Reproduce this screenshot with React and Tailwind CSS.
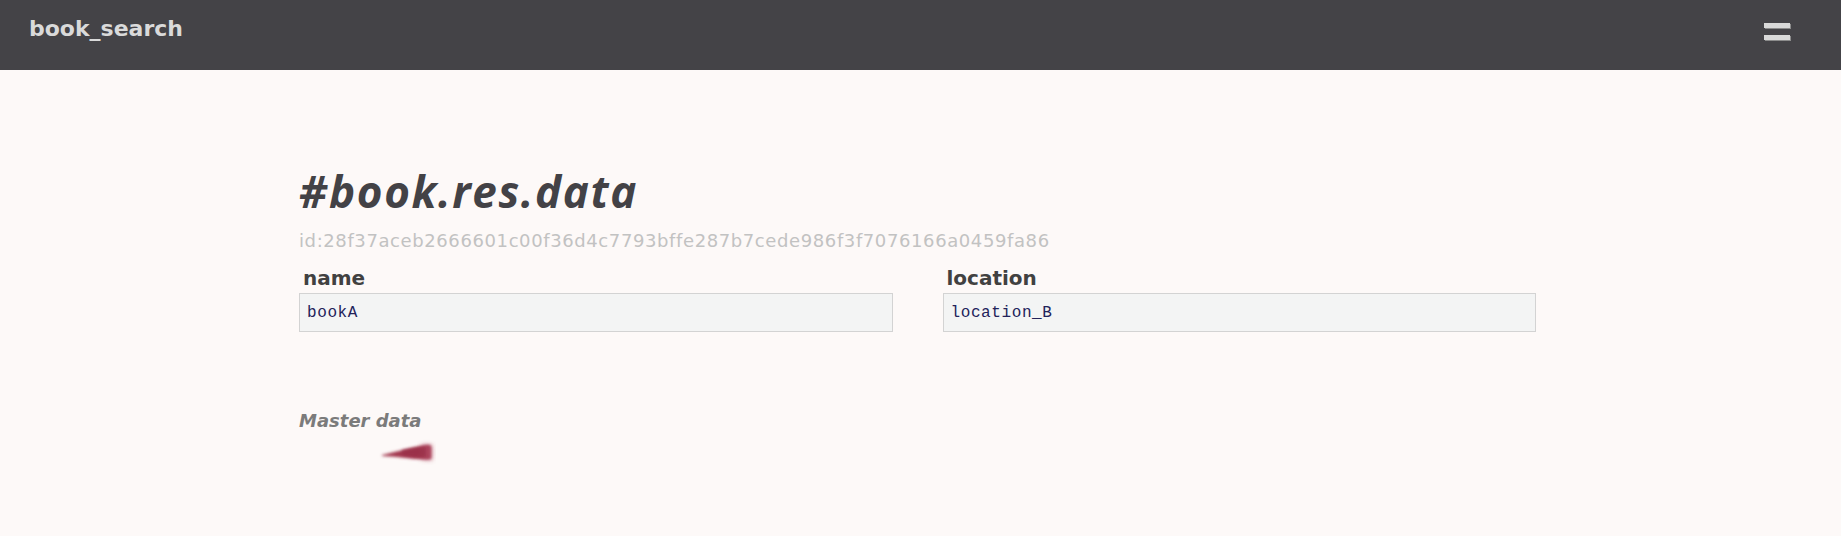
import React from "react";

function Brush() {
  return (
    <svg width="76" height="32" viewBox="0 0 76 32" className="block">
      <defs>
        <filter id="bl" x="-30%" y="-60%" width="160%" height="220%">
          <feGaussianBlur stdDeviation="1.6" />
        </filter>
        <filter id="bl2" x="-30%" y="-60%" width="160%" height="220%">
          <feGaussianBlur stdDeviation="2.4" />
        </filter>
      </defs>
      <path
        d="M10 18 Q 22 15 35 12 Q 48 8.5 57 8 L 59 9 L 59 22 Q 47 23 34 21 Q 22 19.5 10 19 Z"
        fill="#a3384f"
        filter="url(#bl)"
      />
      <path d="M49 8 L 60 8 L 60 23 L 49 22 Z" fill="#b04a62" filter="url(#bl2)" opacity="0.75" />
      <path d="M30 13 Q 44 10 54 10 L 54 20 Q 44 20 30 18 Z" fill="#982d47" filter="url(#bl)" opacity="0.7" />
    </svg>
  );
}

export default function App() {
  return (
    <div className="min-h-screen bg-[#fdf9f8]" style={{ fontFamily: '"DejaVu Sans", Verdana, sans-serif' }}>
      <header className="h-[70px] bg-[#444347] flex justify-between">
        <div className="pl-[29px] pt-[16px] text-[22px] leading-[26px] font-bold text-[#dadada]">book_search</div>
        <div className="pr-[51px] pt-[23px] flex flex-col gap-[7px]">
          <span className="block w-[26px] h-[5px] bg-[#d9d9d9] shadow-[1px_1px_0_#8c8c8c]" />
          <span className="block w-[26px] h-[5px] bg-[#d9d9d9] shadow-[1px_1px_0_#8c8c8c]" />
        </div>
      </header>
      <main className="pl-[299px] pr-[305px] pt-[99px]">
        <h1
          className="text-[44px] leading-[44px] font-bold italic tracking-[1.6px] text-[#434246]"
          style={{ fontFamily: '"Open Sans", sans-serif' }}
        >
          #book.res.data
        </h1>
        <div className="mt-[17px] text-[18px] leading-[21px] tracking-[0.6px] text-[#c2c2c2]">
          id:28f37aceb2666601c00f36d4c7793bffe287b7cede986f3f7076166a0459fa86
        </div>
        <div className="mt-[15px] grid grid-cols-2 gap-[50px]">
          {[
            ["name", "bookA"],
            ["location", "location_B"],
          ].map(([label, value]) => (
            <div key={label}>
              <div className="pl-[4px] text-[20px] leading-[24px] font-bold text-[#414141]">{label}</div>
              <div
                className="mt-[3px] h-[39px] border border-[#d3d3d3] bg-[#f3f4f4] pl-[7px] flex items-center text-[16px] text-[#22225a]"
                style={{ fontFamily: '"Liberation Mono", monospace', letterSpacing: "0.6px" }}
              >
                {value}
              </div>
            </div>
          ))}
        </div>
        <div className="mt-[78px] text-[18px] leading-[21px] font-bold italic text-[#7b7b7b]">Master data</div>
        <div className="mt-[6px] ml-[73px]">
          <Brush />
        </div>
      </main>
    </div>
  );
}
